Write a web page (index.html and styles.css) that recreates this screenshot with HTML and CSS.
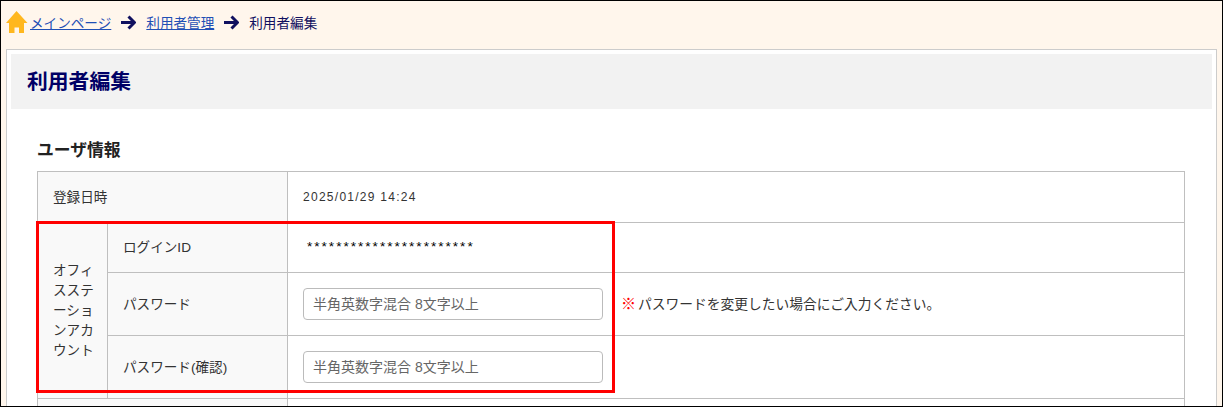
FILE: index.html
```html
<!DOCTYPE html>
<html lang="ja">
<head>
<meta charset="utf-8">
<title>利用者編集</title>
<link rel="stylesheet" href="styles.css">
</head>
<body>
<div class="frame">
  <nav class="crumbs">
    <svg class="home" viewBox="0 0 22 22" width="22" height="22"><path d="M10.500 0 L21.500 12 L18 12 L18 22 L13 22 L13 16.500 L8.500 16.500 L8.500 22 L3 22 L3 12 L0 12 Z" fill="#ffb71e"/></svg>
    <a href="#">メインページ</a>
    <svg class="arrow" viewBox="0 0 15 15" width="15" height="15"><path d="M0 7.500 H13 M7.500 1.500 L13.500 7.500 L7.500 13.500" fill="none" stroke="#10105f" stroke-width="3"/></svg>
    <a href="#">利用者管理</a>
    <svg class="arrow" viewBox="0 0 15 15" width="15" height="15"><path d="M0 7.500 H13 M7.500 1.500 L13.500 7.500 L7.500 13.500" fill="none" stroke="#10105f" stroke-width="3"/></svg>
    <span class="current">利用者編集</span>
  </nav>
  <main class="panel">
    <h1 class="title">利用者編集</h1>
    <section class="content">
      <h2 class="subtitle">ユーザ情報</h2>
      <div class="table-wrap">
        <table class="info">
          <colgroup><col class="c1"><col class="c2"><col></colgroup>
          <tr class="r1"><th colspan="2" class="lift">登録日時</th><td class="date">2025/01/29 14:24</td></tr>
          <tr class="r2"><th rowspan="3" class="group">オフィスステーションアカウント</th><th class="sub lift">ログインID</th><td class="stars">***********************</td></tr>
          <tr class="r3"><th class="sub lift">パスワード</th><td><div class="field"><input class="input" type="text" placeholder="半角英数字混合 8文字以上"><span class="note"><span class="mark">※</span>パスワードを変更したい場合にご入力ください。</span></div></td></tr>
          <tr class="r3"><th class="sub lift">パスワード(確認)</th><td><div class="field"><input class="input" type="text" placeholder="半角英数字混合 8文字以上"></div></td></tr>
          <tr class="r4"><th colspan="2"></th><td></td></tr>
        </table>
        <div class="highlight"></div>
      </div>
    </section>
  </main>
</div>
</body>
</html>
```

FILE: styles.css
```css
* { box-sizing: border-box; }
html, body { margin: 0; height: 407px; overflow: hidden; background: #fff; }
body { font-family: "Liberation Sans", "Noto Sans CJK JP", sans-serif; color: #333; font-size: 13.6px; }
.frame { width: 1223px; height: 407px; border: 1px solid #000; background: #fff6ec; padding: 0 5px; overflow: hidden; }
.crumbs { height: 48px; display: flex; align-items: center; padding-bottom: 7px; }
.home { margin: 1px 2px 0 0; flex: none; }
.crumbs a { color: #1f4fb5; text-decoration: underline; font-size: 13.6px; }
.arrow { margin: 1px 10px 0; flex: none; }
.current { color: #10105f; font-size: 13.6px; }
.panel { width: 1211px; height: 400px; background: #fff; border: 1px solid #ccc; padding: 4px; }
.title { margin: 0; width: 1201px; height: 55px; background: #f2f2f2; color: #000066; font-size: 20.8px; font-weight: bold; line-height: 55px; padding-left: 16px; }
.content { padding: 0 26px; width: 1201px; }
.subtitle { margin: 31px 0 9px; font-size: 16.8px; line-height: 22px; color: #222; font-weight: bold; height: 22px; }
.table-wrap { position: relative; }
.info { width: 1148px; border-collapse: collapse; table-layout: fixed; }
.c1 { width: 70px; }
.c2 { width: 180px; }
.info th, .info td { border: 1px solid #bfbfbf; font-weight: normal; text-align: left; padding: 0 15px; color: #333; font-size: 13.6px; }
.info th { background: #f9f9f9; }
.r1 { height: 51px; }
.r2 { height: 50px; }
.r3 { height: 63px; }
.r4 { height: 40px; }
.info .group { line-height: 20px; word-break: break-all; padding-right: 13px; }
.info .lift { padding-bottom: 3px; }
.info .date { font-size: 12px; letter-spacing: 1.27px; }
.info .stars { padding-left: 19px; padding-bottom: 3px; color: #000; letter-spacing: 2px; }
.field { display: flex; align-items: center; }
.input { width: 300px; height: 32px; border: 1px solid #bbb; border-radius: 4px; padding: 0 9px; font: inherit; font-size: 14px; background: #fff; flex: none; }
.input::placeholder { color: #666; opacity: 1; }
.note { margin-left: 18px; font-size: 13.75px; padding-bottom: 3px; }
.mark { color: #f00; font-weight: bold; font-size: 15px; margin-right: 2px; }
.highlight { position: absolute; left: -1px; top: 50px; width: 579px; height: 172px; border: 3px solid #f00; pointer-events: none; }
```
